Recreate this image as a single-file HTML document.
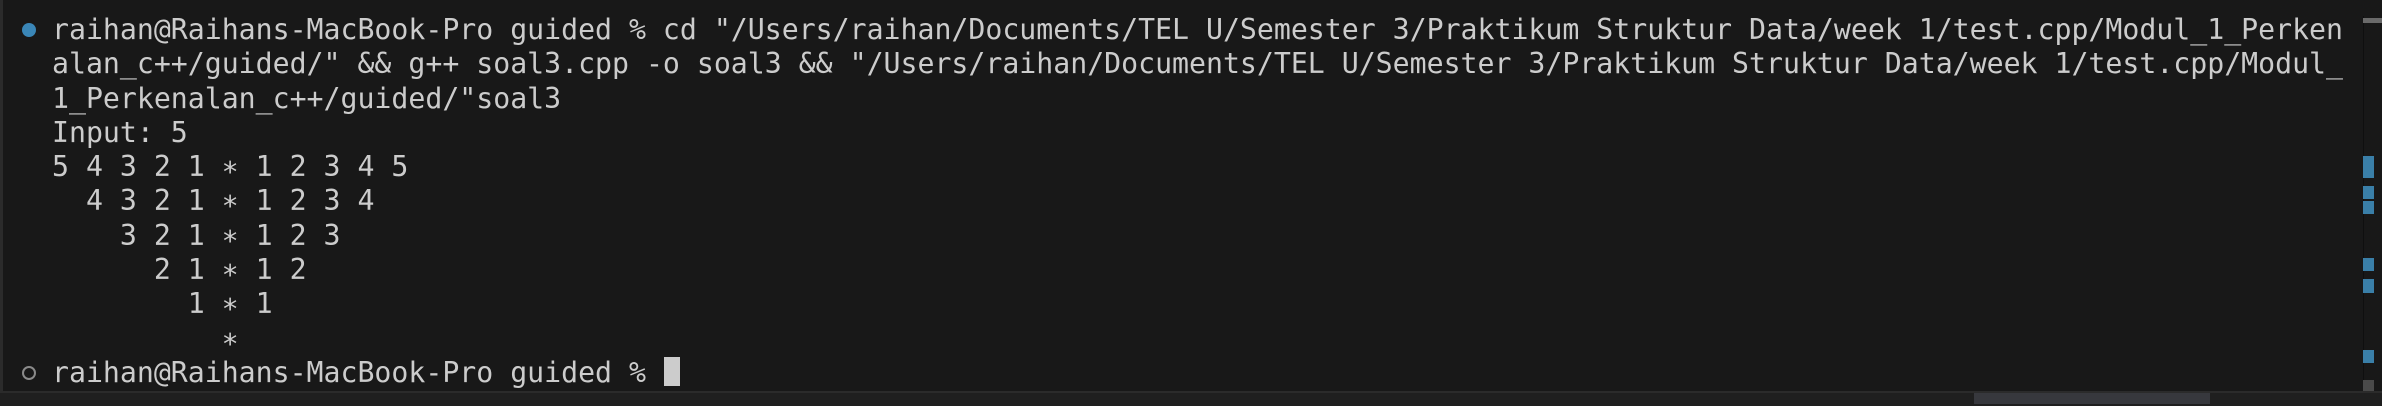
<!DOCTYPE html>
<html><head><meta charset="utf-8"><style>
html,body{margin:0;padding:0;}
body{width:2382px;height:404px;background:#181818;position:relative;overflow:hidden;}
.l{position:absolute;left:0;top:0;width:3px;height:392px;background:#2b2b2b;}
pre{position:absolute;left:52px;top:13px;margin:0;font-family:"DejaVu Sans Mono","Liberation Mono",monospace;font-size:28.2px;line-height:34.3px;color:#cccccc;white-space:pre;}
.dot{position:absolute;left:22px;top:23px;width:14px;height:14px;border-radius:50%;background:#3a86b7;}
.ring{position:absolute;left:22px;top:366px;width:10px;height:10px;border-radius:50%;border:2px solid #8a8a8a;}
.cur{position:absolute;left:664px;top:357px;width:16px;height:29px;background:#cccccc;}
.bot{position:absolute;left:0;top:391px;width:2382px;height:13px;background:#1f1f1f;border-top:2px solid #2b2b2b;}
.tab{position:absolute;left:1974px;top:393px;width:236px;height:11px;background:#37383d;}
.sb{position:absolute;left:2363px;top:16px;width:19px;height:375px;border-left:1px solid #0f0f0f;}
.m{position:absolute;left:2363px;width:11px;background:#3a7fa8;}
.th{position:absolute;left:2363px;top:18px;width:19px;height:5px;background:#6a6a6a;}
.gb{position:absolute;left:2363px;top:380px;width:11px;height:11px;background:#4a4a4a;}
</style></head><body>
<div class="l"></div>
<div class="dot"></div>
<div class="ring"></div>
<pre>raihan@Raihans-MacBook-Pro guided % cd "/Users/raihan/Documents/TEL U/Semester 3/Praktikum Struktur Data/week 1/test.cpp/Modul_1_Perken
alan_c++/guided/" &amp;&amp; g++ soal3.cpp -o soal3 &amp;&amp; "/Users/raihan/Documents/TEL U/Semester 3/Praktikum Struktur Data/week 1/test.cpp/Modul_
1_Perkenalan_c++/guided/"soal3
Input: 5
5 4 3 2 1 ∗ 1 2 3 4 5
  4 3 2 1 ∗ 1 2 3 4
    3 2 1 ∗ 1 2 3
      2 1 ∗ 1 2
        1 ∗ 1
          ∗
raihan@Raihans-MacBook-Pro guided % </pre>
<div class="cur"></div>
<div class="sb"></div>
<div class="th"></div>
<div class="m" style="top:156px;height:22px"></div>
<div class="m" style="top:186px;height:13px"></div>
<div class="m" style="top:201px;height:13px"></div>
<div class="m" style="top:258px;height:13px"></div>
<div class="m" style="top:279px;height:14px"></div>
<div class="m" style="top:350px;height:13px"></div>
<div class="gb"></div>
<div class="bot"></div>
<div class="tab"></div>
</body></html>
